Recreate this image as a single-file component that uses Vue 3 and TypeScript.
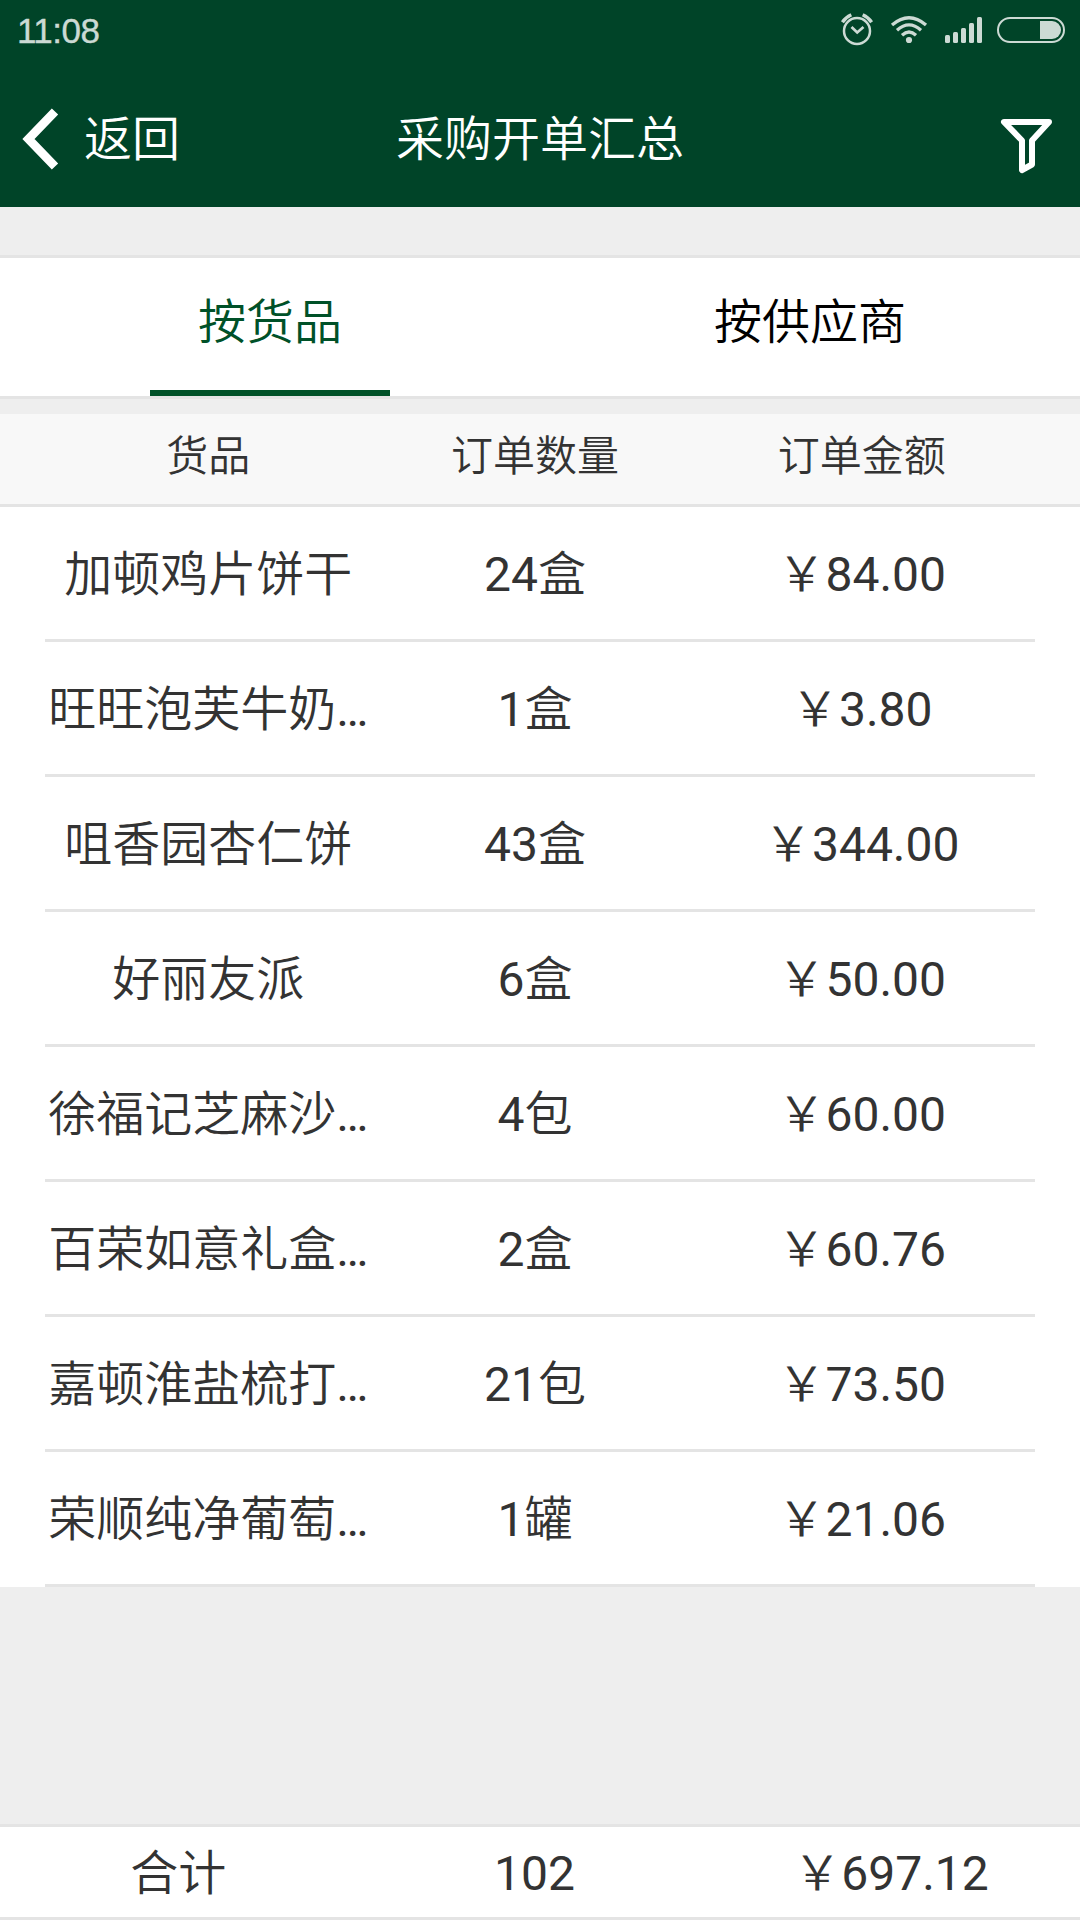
<script setup lang="ts">
interface Item {
  name: string
  quantity: string
  amount: string
}

const items: Item[] = [
  { name: '加顿鸡片饼干', quantity: '24盒', amount: '￥84.00' },
  { name: '旺旺泡芙牛奶…', quantity: '1盒', amount: '￥3.80' },
  { name: '咀香园杏仁饼', quantity: '43盒', amount: '￥344.00' },
  { name: '好丽友派', quantity: '6盒', amount: '￥50.00' },
  { name: '徐福记芝麻沙…', quantity: '4包', amount: '￥60.00' },
  { name: '百荣如意礼盒…', quantity: '2盒', amount: '￥60.76' },
  { name: '嘉顿淮盐梳打…', quantity: '21包', amount: '￥73.50' },
  { name: '荣顺纯净葡萄…', quantity: '1罐', amount: '￥21.06' },
]
</script>

<template>
  <div class="screen">
    <div class="status">
      <span class="clock">11:08</span>
      <svg class="status-icons" width="260" height="60" viewBox="0 0 260 60" fill="none" stroke="#ccdad4">
        <circle cx="37" cy="31" r="13" stroke-width="2.500" />
        <path d="M31.5 27l5.700 5.500 6.300-5.500" stroke-width="2.700" />
        <path d="M22.400 22.200Q25.500 17.500 31.300 14.800M51.600 22.200Q48.500 17.500 42.700 14.800" stroke-width="3.400" />
        <path d="M72 25Q89 10.500 106 25" stroke-width="3.300" />
        <path d="M77 30.200Q89 19.500 101 30.200" stroke-width="3.300" />
        <path d="M82 35.200Q89 28.800 96 35.200" stroke-width="3.300" />
        <circle cx="89" cy="40" r="3.100" fill="#ccdad4" stroke="none" />
        <g fill="#ccdad4" stroke="none">
          <rect x="125" y="35" width="5" height="8" rx="1.500" />
          <rect x="133" y="32" width="5" height="11" rx="1.500" />
          <rect x="141" y="28" width="5" height="15" rx="1.500" />
          <rect x="149" y="23" width="5" height="20" rx="1.500" />
          <rect x="157" y="17" width="5" height="26" rx="1.500" />
          <path d="M220 21h12a9 9 0 0 1 0 18h-12z" />
        </g>
        <rect x="178" y="18" width="66" height="24" rx="12" stroke-width="2" />
      </svg>
    </div>

    <header class="bar">
      <div class="back">
        <svg width="38" height="64" viewBox="0 0 38 64" fill="none">
          <path d="M33 4.500L6.500 32L33 59.500" stroke="#fff" stroke-width="8.800" />
        </svg>
        <span>返回</span>
      </div>
      <h1>采购开单汇总</h1>
      <div class="filter">
        <svg width="54" height="58" viewBox="0 0 54 58" fill="none">
          <path d="M4 5H49L32 23.500V47.500L22 53V23.500Z" stroke="#fff" stroke-width="6" stroke-linejoin="round" />
        </svg>
      </div>
    </header>

    <nav class="tabs">
      <div class="tab active"><span>按货品</span></div>
      <div class="tab"><span>按供应商</span></div>
    </nav>

    <div class="head cols">
      <span>货品</span>
      <span>订单数量</span>
      <span>订单金额</span>
    </div>

    <div class="list">
      <div v-for="item in items" :key="item.name" class="row cols">
        <span>{{ item.name }}</span>
        <span>{{ item.quantity }}</span>
        <span>{{ item.amount }}</span>
      </div>
    </div>

    <footer class="total cols">
      <span>合计</span>
      <span>102</span>
      <span>￥697.12</span>
    </footer>
  </div>
</template>

<style>
body {
  margin: 0;
  background: #eee;
}
</style>

<style scoped>
.screen {
  display: flex;
  flex-direction: column;
  width: 1080px;
  height: 1920px;
  overflow: hidden;
  background: #eee;
  color: #333;
  font-family: Roboto, "Noto Sans CJK SC DemiLight", "Noto Sans CJK SC", sans-serif;
  font-size: 48px;
}
.status {
  display: flex;
  justify-content: space-between;
  height: 60px;
  background: #004428;
}
.clock {
  padding-left: 17px;
  font-family: "Liberation Sans", sans-serif;
  font-size: 35px;
  line-height: 61px;
  letter-spacing: -0.5px;
  -webkit-text-stroke: 0.4px #ccdad4;
  color: #ccdad4;
}
.bar {
  display: grid;
  grid-template-columns: 1fr auto 1fr;
  align-items: center;
  height: 147px;
  background: #004428;
  color: #fff;
}
.bar h1 {
  margin: 0;
  padding-top: 13px;
  font-size: 48px;
  font-weight: 400;
  line-height: 60px;
}
.back {
  display: flex;
  align-items: center;
  gap: 24px;
  padding: 11px 0 0 22px;
  line-height: 60px;
}
.back span {
  padding-top: 2px;
}
.filter {
  display: flex;
  justify-content: flex-end;
  padding: 24px 26px 0 0;
}
.tabs {
  display: flex;
  flex: none;
  height: 138px;
  margin-top: 48px;
  border-top: 3px solid #e4e4e4;
  border-bottom: 3px solid #e4e4e4;
  background: #fff;
}
.tab {
  display: flex;
  flex: 1;
  justify-content: center;
  color: #000;
}
.tab span {
  width: 240px;
  box-sizing: border-box;
  text-align: center;
  line-height: 130px;
}
.tab.active span {
  border-bottom: 6px solid #005128;
  color: #005128;
}
.cols {
  display: flex;
  white-space: nowrap;
}
.cols span {
  width: 33%;
  text-align: center;
}
.head {
  height: 90px;
  margin-top: 15px;
  padding: 0 45px;
  border-bottom: 3px solid #e4e4e4;
  background: #f8f8f8;
  font-size: 42px;
  line-height: 86px;
}
.list {
  padding: 0 45px;
  background: #fff;
}
.row {
  height: 132px;
  border-bottom: 3px solid #e4e4e4;
  line-height: 136px;
}
.total {
  height: 90px;
  margin-top: auto;
  border-top: 3px solid #e4e4e4;
  border-bottom: 3px solid #e4e4e4;
  background: #fff;
  line-height: 93px;
}
</style>
